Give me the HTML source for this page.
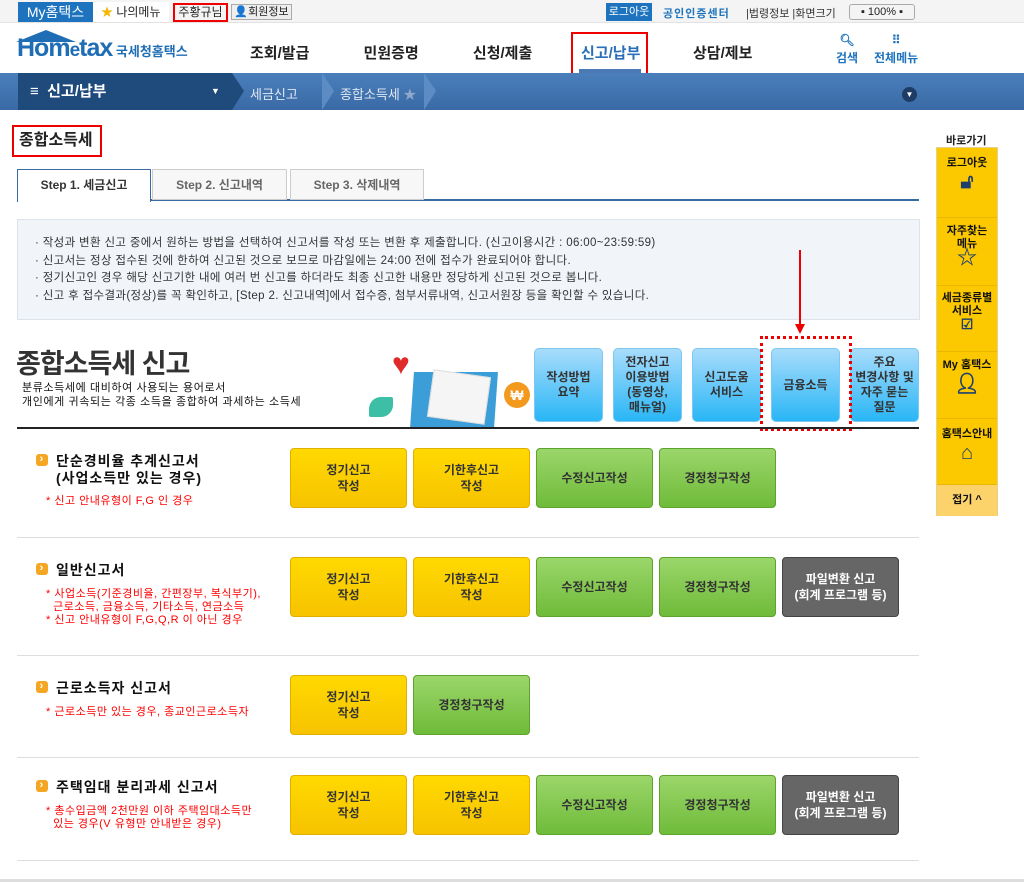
<!DOCTYPE html>
<html><head><meta charset="utf-8"><style>
*{margin:0;padding:0;box-sizing:border-box}
body{width:1024px;height:882px;position:relative;overflow:hidden;background:#fff;font-family:"Liberation Sans","Noto Sans CJK KR","NanumGothic",sans-serif;color:#222}
.a{position:absolute}
.btn{position:absolute;width:117px;height:60px;border-radius:4px;display:flex;align-items:center;justify-content:center;text-align:center;font-size:12px;line-height:16px;font-weight:bold;color:#333}
.y{background:linear-gradient(#ffd900,#f7c300);border:1px solid #e0b000}
.g{background:linear-gradient(#9bd66a,#6fbb3a);border:1px solid #5da32c}
.d{background:#666;border:1px solid #444;color:#fff}
.bb{position:absolute;top:348px;width:69px;height:74px;border-radius:5px;background:linear-gradient(#a8dcfb,#29b6f6);border:1px solid #7cc8f0;display:flex;align-items:center;justify-content:center;text-align:center;font-size:12px;line-height:15px;font-weight:bold;color:#333}
.sec{position:absolute;left:17px;width:902px;border-bottom:1px solid #ddd}
.st{position:absolute;left:36px;font-size:14px;font-weight:bold;color:#111;line-height:17px;letter-spacing:1px}
.st:before{content:"›";position:absolute;left:0;top:1px;width:12px;height:12px;border-radius:3px;background:#f5a623;color:#fff;font-size:11px;line-height:11px;text-align:center}
.st span{padding-left:20px;display:block}
.note{position:absolute;left:46px;font-size:11px;color:#f00;line-height:13px;letter-spacing:0.5px}
.sb{position:absolute;left:937px;width:60px;border-bottom:1px solid #e8b800;text-align:center;font-size:11px;font-weight:bold;color:#111;line-height:13px}
.chev{position:absolute;top:73px;width:0;height:0;border-top:18px solid transparent;border-bottom:19px solid transparent;border-left:12px solid #5d8cc4}
</style></head><body>
<!-- top bar -->
<div class="a" style="left:0;top:0;width:1024px;height:23px;background:#f4f4f4;border-bottom:1px solid #e2e2e2"></div>
<div class="a" style="left:18px;top:2px;width:75px;height:20px;background:#1e73be;color:#fff;font-size:14px;line-height:20px;text-align:center">My홈택스</div>
<div class="a" style="left:93px;top:2px;width:76px;height:20px;background:#fff;font-size:12px;line-height:20px;padding-left:8px"><span style="color:#f7b500">★</span> 나의메뉴</div>
<div class="a" style="left:173px;top:3px;width:55px;height:19px;border:2px solid #e00;font-size:12px;line-height:15px;text-align:center">주황규님</div>
<div class="a" style="left:231px;top:4px;width:61px;height:16px;border:1px solid #aaa;background:#eee;font-size:11px;line-height:14px;text-align:center">👤회원정보</div>
<div class="a" style="left:606px;top:3px;width:46px;height:18px;background:#1e73be;color:#fff;font-size:11px;line-height:18px;text-align:center">로그아웃</div>
<div class="a" style="left:663px;top:5px;font-size:11px;font-weight:bold;color:#1e73be;letter-spacing:1px">공인인증센터</div>
<div class="a" style="left:746px;top:5px;font-size:11px;color:#333">|법령정보 |화면크기</div>
<div class="a" style="left:849px;top:4px;width:66px;height:16px;border:1px solid #aaa;border-radius:3px;font-size:11px;line-height:14px;text-align:center">▪ 100% ▪</div>
<!-- header -->
<div class="a" style="left:17px;top:34px;font-size:25px;font-weight:bold;color:#1f6db5;letter-spacing:-1px;white-space:nowrap">Hom<span style="font-size:19px">e</span>tax<span style="font-size:13px;color:#1f6db5;letter-spacing:0;font-weight:bold"> 국세청홈택스</span></div>
<div class="a" style="left:16px;top:30px;width:0;height:0;border-left:30px solid transparent;border-right:30px solid transparent;border-bottom:12px solid #1f6db5"></div>
<div class="a" style="top:42px;left:250px;font-size:15px;font-weight:bold;color:#222;word-spacing:50px;white-space:nowrap">조회/발급 민원증명 신청/제출</div>
<div class="a" style="top:42px;left:581px;font-size:15px;font-weight:bold;color:#2a6fb8">신고/납부</div>
<div class="a" style="left:579px;top:69px;width:62px;height:4px;background:#4b79b3"></div>
<div class="a" style="left:571px;top:32px;width:77px;height:47px;border:2px solid #e00"></div>
<div class="a" style="top:42px;left:693px;font-size:15px;font-weight:bold;color:#222">상담/제보</div>
<div class="a" style="left:836px;top:31px;font-size:12px;font-weight:bold;color:#1e73be;text-align:center;line-height:18px">🔍︎<br>검색</div>
<div class="a" style="left:874px;top:31px;font-size:12px;font-weight:bold;color:#1e73be;text-align:center;line-height:18px">⠿<br>전체메뉴</div>
<!-- nav -->
<div class="a" style="left:0;top:73px;width:1024px;height:37px;background:linear-gradient(#4a7fbb,#3a6aa5)"></div>
<div class="a" style="left:18px;top:73px;width:214px;height:37px;background:#1f4a7c;color:#fff;font-size:15px;font-weight:bold;line-height:37px;padding-left:12px">≡ &nbsp;신고/납부<span style="position:absolute;left:193px;font-size:9px">▼</span></div>
<div class="chev" style="left:232px;border-left-color:#1f4a7c"></div>
<div class="chev" style="left:322px"></div>
<div class="chev" style="left:424px"></div>
<div class="a" style="left:250px;top:84px;font-size:13px;color:#e0e8f4">세금신고</div>
<div class="a" style="left:340px;top:84px;font-size:13px;color:#e0e8f4">종합소득세 <span style="color:#8fa9cb">★</span></div>
<div class="a" style="left:902px;top:87px;width:15px;height:15px;border-radius:50%;background:#1e3d66;color:#fff;font-size:8px;line-height:15px;text-align:center">▼</div>
<!-- title -->
<div class="a" style="left:12px;top:125px;width:90px;height:32px;border:2px solid #e00;font-size:16px;font-weight:bold;line-height:28px;padding-left:5px">종합소득세</div>
<!-- tabs -->
<div class="a" style="left:17px;top:199px;width:902px;height:2px;background:#3a6aa5"></div>
<div class="a" style="left:17px;top:169px;width:134px;height:33px;border:1px solid #3a6aa5;border-bottom:none;background:#fff;font-size:12px;font-weight:bold;line-height:31px;text-align:center;color:#333">Step 1. 세금신고</div>
<div class="a" style="left:152px;top:169px;width:135px;height:31px;border:1px solid #ccc;background:#f7f7f7;font-size:12px;font-weight:bold;line-height:31px;text-align:center;color:#666">Step 2. 신고내역</div>
<div class="a" style="left:290px;top:169px;width:134px;height:31px;border:1px solid #ccc;background:#f7f7f7;font-size:12px;font-weight:bold;line-height:31px;text-align:center;color:#666">Step 3. 삭제내역</div>
<!-- info -->
<div class="a" style="left:17px;top:219px;width:903px;height:101px;background:#f1f5fa;border:1px solid #dde3ea;padding:15px 0 0 17px;font-size:11.5px;letter-spacing:0.35px;line-height:17.5px;color:#333;white-space:nowrap">
· 작성과 변환 신고 중에서 원하는 방법을 선택하여 신고서를 작성 또는 변환 후 제출합니다. (신고이용시간 : 06:00~23:59:59)<br>
· 신고서는 정상 접수된 것에 한하여 신고된 것으로 보므로 마감일에는 24:00 전에 접수가 완료되어야 합니다.<br>
· 정기신고인 경우 해당 신고기한 내에 여러 번 신고를 하더라도 최종 신고한 내용만 정당하게 신고된 것으로 봅니다.<br>
· 신고 후 접수결과(정상)를 꼭 확인하고, [Step 2. 신고내역]에서 접수증, 첨부서류내역, 신고서원장 등을 확인할 수 있습니다.</div>
<!-- big heading -->
<div class="a" style="left:16px;top:342px;font-size:27px;font-weight:bold;color:#333;letter-spacing:-1px">종합소득세 신고</div>
<div class="a" style="left:22px;top:381px;font-size:11px;line-height:14px;color:#111;letter-spacing:0.6px">분류소득세에 대비하여 사용되는 용어로서<br>개인에게 귀속되는 각종 소득을 종합하여 과세하는 소득세</div>
<!-- illustration -->
<div class="a" style="left:392px;top:350px;font-size:30px;color:#e02a2a;line-height:30px">♥</div>
<div class="a" style="left:369px;top:397px;width:24px;height:20px;border-radius:12px 2px 12px 2px;background:#3cbfa5"></div>
<div class="a" style="left:412px;top:372px;width:84px;height:56px;background:#3b9ed8;transform:skewX(-4deg)"></div>
<div class="a" style="left:430px;top:373px;width:58px;height:48px;background:#f5f5f5;border:1px solid #ddd;transform:rotate(8deg)"></div>
<div class="a" style="left:504px;top:382px;width:26px;height:26px;border-radius:50%;background:#f39a1e;color:#fff;font-weight:bold;font-size:14px;line-height:26px;text-align:center">₩</div>
<!-- blue buttons -->
<div class="bb" style="left:534px">작성방법<br>요약</div>
<div class="bb" style="left:613px">전자신고<br>이용방법<br>(동영상,<br>매뉴얼)</div>
<div class="bb" style="left:692px">신고도움<br>서비스</div>
<div class="bb" style="left:771px">금융소득</div>
<div class="bb" style="left:850px">주요<br>변경사항 및<br>자주 묻는<br>질문</div>
<div class="a" style="left:760px;top:336px;width:92px;height:95px;border:3px dotted #e00"></div>
<div class="a" style="left:799px;top:250px;width:2px;height:78px;background:#e00"></div>
<div class="a" style="left:795px;top:324px;width:0;height:0;border-left:5px solid transparent;border-right:5px solid transparent;border-top:10px solid #e00"></div>
<div class="a" style="left:17px;top:427px;width:902px;height:2px;background:#222"></div>
<!-- sections -->
<div class="sec" style="top:429px;height:109px"></div>
<div class="st" style="top:453px"><span>단순경비율 추계신고서<br>(사업소득만 있는 경우)</span></div>
<div class="note" style="top:495px">* 신고 안내유형이 F,G 인 경우</div>
<div class="btn y" style="left:290px;top:448px">정기신고<br>작성</div>
<div class="btn y" style="left:413px;top:448px">기한후신고<br>작성</div>
<div class="btn g" style="left:536px;top:448px">수정신고작성</div>
<div class="btn g" style="left:659px;top:448px">경정청구작성</div>

<div class="sec" style="top:538px;height:118px"></div>
<div class="st" style="top:562px"><span>일반신고서</span></div>
<div class="note" style="top:588px">* 사업소득(기준경비율, 간편장부, 복식부기),<br>&nbsp;&nbsp;근로소득, 금융소득, 기타소득, 연금소득<br>* 신고 안내유형이 F,G,Q,R 이 아닌 경우</div>
<div class="btn y" style="left:290px;top:557px">정기신고<br>작성</div>
<div class="btn y" style="left:413px;top:557px">기한후신고<br>작성</div>
<div class="btn g" style="left:536px;top:557px">수정신고작성</div>
<div class="btn g" style="left:659px;top:557px">경정청구작성</div>
<div class="btn d" style="left:782px;top:557px">파일변환 신고<br>(회계 프로그램 등)</div>

<div class="sec" style="top:656px;height:102px"></div>
<div class="st" style="top:680px"><span>근로소득자 신고서</span></div>
<div class="note" style="top:706px">* 근로소득만 있는 경우, 종교인근로소득자</div>
<div class="btn y" style="left:290px;top:675px">정기신고<br>작성</div>
<div class="btn g" style="left:413px;top:675px">경정청구작성</div>

<div class="sec" style="top:758px;height:103px"></div>
<div class="st" style="top:779px"><span>주택임대 분리과세 신고서</span></div>
<div class="note" style="top:805px">* 총수입금액 2천만원 이하 주택임대소득만<br>&nbsp;&nbsp;있는 경우(V 유형만 안내받은 경우)</div>
<div class="btn y" style="left:290px;top:775px">정기신고<br>작성</div>
<div class="btn y" style="left:413px;top:775px">기한후신고<br>작성</div>
<div class="btn g" style="left:536px;top:775px">수정신고작성</div>
<div class="btn g" style="left:659px;top:775px">경정청구작성</div>
<div class="btn d" style="left:782px;top:775px">파일변환 신고<br>(회계 프로그램 등)</div>
<div class="a" style="left:0;top:879px;width:1024px;height:3px;background:#ddd"></div>
<!-- sidebar -->
<div class="a" style="left:946px;top:132px;font-size:11px;font-weight:bold;color:#222">바로가기</div>
<div class="a" style="left:936px;top:147px;width:62px;height:369px;background:#fcc800;border:1px solid #e8d08a"></div>
<div class="sb" style="top:148px;height:70px;padding-top:9px">로그아웃<div style="font-size:20px;color:#1d3f6e;margin-top:6px">🔓︎</div></div>
<div class="sb" style="top:218px;height:68px;padding-top:7px">자주찾는<br>메뉴<div style="font-size:20px;color:#1d3f6e;margin-top:1px">☆</div></div>
<div class="sb" style="top:286px;height:66px;padding-top:6px">세금종류별<br>서비스<div style="font-size:14px;color:#1d3f6e">☑</div></div>
<div class="sb" style="top:352px;height:67px;padding-top:7px">My 홈택스<div style="font-size:20px;color:#1d3f6e;margin-top:6px">👤︎</div></div>
<div class="sb" style="top:419px;height:66px;padding-top:9px">홈택스안내<div style="font-size:20px;color:#1d3f6e;margin-top:6px">⌂</div></div>
<div class="sb" style="top:485px;height:31px;background:#fcd36b;line-height:31px;border:none">접기 ^</div>
</body></html>
